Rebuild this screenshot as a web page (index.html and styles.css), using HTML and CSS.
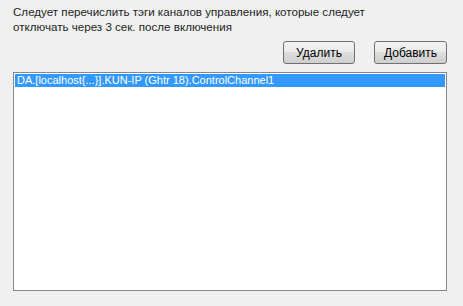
FILE: index.html
```html
<!DOCTYPE html>
<html>
<head>
<meta charset="utf-8">
<link rel="stylesheet" href="styles.css">
</head>
<body>
<div class="panel">
  <p class="hint">Следует перечислить тэги каналов управления, которые следует<br>отключать через 3 сек. после включения</p>
  <div class="actions">
    <button class="btn btn-del">Удалить</button>
    <button class="btn btn-add">Добавить</button>
  </div>
  <div class="listbox">
    <div class="item selected">DA.[localhost{...}].KUN-IP (Ghtr 18).ControlChannel1</div>
  </div>
</div>
</body>
</html>
```
FILE: styles.css
```css
html, body {
  margin: 0;
  padding: 0;
  background: #f0f0f0;
}
body {
  width: 463px;
  height: 306px;
  overflow: hidden;
  font-family: "Liberation Sans", sans-serif;
  font-size: 11px;
  color: #000;
}
.panel {
  padding: 4px 16px 0 13px;
}
.hint {
  margin: 0;
  line-height: 15px;
  font-size: 11.6px;
  color: #1e1e1e;
}
.actions {
  display: flex;
  justify-content: flex-end;
  gap: 19px;
  margin-top: 7px;
}
.btn {
  height: 23px;
  border: 1px solid #707070;
  border-radius: 3px;
  background: linear-gradient(#f2f2f2 0%, #ebebeb 45%, #dddddd 50%, #cfcfcf 100%);
  font-family: "Liberation Sans", sans-serif;
  font-size: 12px;
  color: #000;
  padding: 0;
}
.btn-del { width: 72px; }
.btn-add { width: 73px; }
.listbox {
  margin-top: 8px;
  height: 215px;
  border: 1px solid #828790;
  background: #fff;
  padding: 1px 1px;
}
.item {
  height: 13px;
  line-height: 13px;
  padding-left: 2px;
  font-size: 11px;
  white-space: nowrap;
}
.item.selected {
  background: #3399ff;
  color: #fff;
}
```
